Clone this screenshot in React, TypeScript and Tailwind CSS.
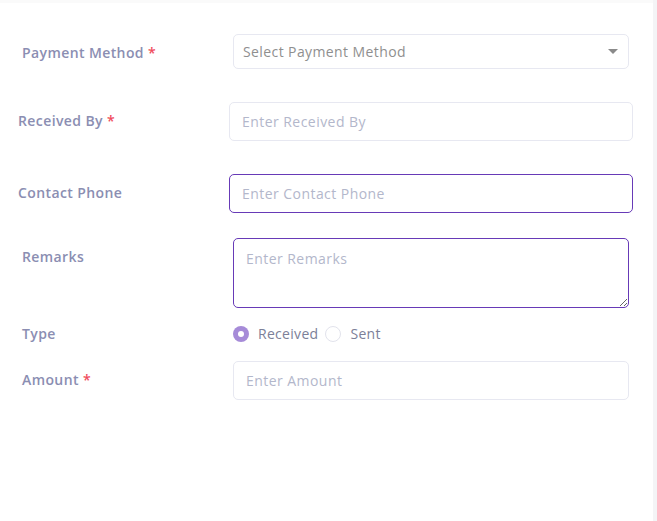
import React, {useState} from 'react'

const labelCls =
  "w-[211px] shrink-0 pt-[9px] text-[14px] leading-5 font-semibold text-[#8b8eb2] tracking-[0.4px]"
const inputBase =
  "flex-1 h-[39px] rounded-[5px] border bg-white px-3 text-[14px] text-[#4b4f66] placeholder:text-[#b3b7cb] tracking-[0.45px] outline-none"

function Req() {
  return <span className="ml-1 text-[#f04c5c]">*</span>
}

function Radio({checked, label, onClick, className}: {checked: boolean; label: string; onClick: () => void; className?: string}) {
  return (
    <button type="button" onClick={onClick} className={'flex items-center gap-[9px] ' + (className ?? '')}>
      <span
        className={
          checked
            ? 'flex h-[16px] w-[16px] items-center justify-center rounded-full bg-[#a68bd8]'
            : 'h-[16px] w-[16px] rounded-full border border-[#e2e3ec]'
        }
      >
        {checked && <span className="h-[6px] w-[6px] rounded-full bg-white" />}
      </span>
      {label}
    </button>
  )
}

export default function App() {
  const [type, setType] = useState<'received' | 'sent'>('received')

  return (
    <div
      className="flex h-[521px] w-[657px] bg-white"
      style={{fontFamily: '"Open Sans", "Noto Sans", sans-serif'}}
    >
      <div className="flex-1 border-t-[3px] border-[#fafafa]">
        <form className="pt-[31px]">
          {/* Payment method */}
          <div className="flex items-start pl-[22px] pr-[24px]">
            <label className={labelCls + ' pt-[8px]'}>
              Payment Method
              <Req />
            </label>
            <div className="relative flex-1">
              <select
                defaultValue=""
                className="h-[35px] w-full appearance-none rounded-[5px] border border-[#e7e8f1] bg-white pl-[9px] pr-8 text-[14px] text-[#8f8f8f] tracking-[0.4px] outline-none"
              >
                <option value="" disabled>
                  Select Payment Method
                </option>
                <option>Cash</option>
                <option>Bank Transfer</option>
                <option>Cheque</option>
              </select>
              <svg
                viewBox="0 0 10 5"
                className="pointer-events-none absolute right-[11px] top-[15px] h-[5px] w-[10px]"
                aria-hidden="true"
              >
                <path d="M0 0h10L5 5z" fill="#8a8a8a" />
              </svg>
            </div>
          </div>

          {/* Received by */}
          <div className="mt-[33px] flex items-start pl-[18px] pr-[20px]">
            <label className={labelCls}>
              Received By
              <Req />
            </label>
            <input type="text" placeholder="Enter Received By" className={inputBase + ' border-[#e7e8f1]'} />
          </div>

          {/* Contact phone */}
          <div className="mt-[33px] flex items-start pl-[18px] pr-[20px]">
            <label className={labelCls}>Contact Phone</label>
            <input
              type="tel"
              placeholder="Enter Contact Phone"
              className={inputBase + ' border-[#673ab7]'}
            />
          </div>

          {/* Remarks */}
          <div className="mt-[25px] flex items-start pl-[22px] pr-[24px]">
            <label className={labelCls}>Remarks</label>
            <textarea
              placeholder="Enter Remarks"
              className="h-[70px] flex-1 rounded-[5px] border border-[#673ab7] bg-white px-3 py-[10px] text-[14px] leading-5 text-[#4b4f66] tracking-[0.45px] placeholder:text-[#b3b7cb] outline-none"
            />
          </div>

          {/* Type */}
          <div className="mt-[15px] flex items-center pl-[22px] pr-[24px]">
            <span className="w-[211px] shrink-0 text-[14px] leading-5 font-semibold text-[#8b8eb2] tracking-[0.4px]">
              Type
            </span>
            <div className="flex items-center text-[14px] text-[#7c8098] tracking-[0.3px]">
              <Radio checked={type === 'received'} label="Received" onClick={() => setType('received')} />
              <Radio
                checked={type === 'sent'}
                label="Sent"
                onClick={() => setType('sent')}
                className="ml-[7px]"
              />
            </div>
          </div>

          {/* Amount */}
          <div className="mt-[17px] flex items-start pl-[22px] pr-[24px]">
            <label className={labelCls}>
              Amount
              <Req />
            </label>
            <input type="number" placeholder="Enter Amount" className={inputBase + ' border-[#e7e8f1]'} />
          </div>
        </form>
      </div>
      <div className="w-[4px] bg-[#f4f4f6]" />
    </div>
  )
}
